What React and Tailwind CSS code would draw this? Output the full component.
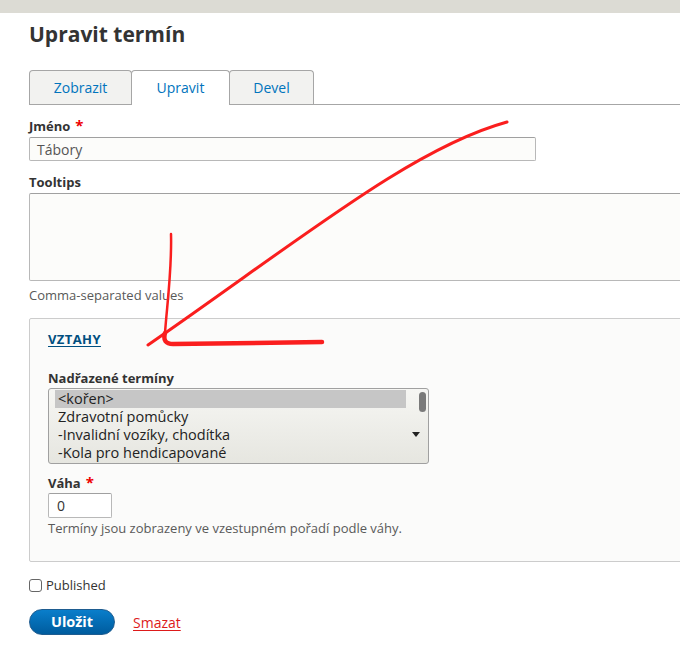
const parents = ['<kořen>', 'Zdravotní pomůcky', '-Invalidní vozíky, chodítka', '-Kola pro hendicapované'];

function Label({ children, required }) {
  return (
    <div className="h-[18px] text-[13px] leading-[18px] font-bold text-[#333]">
      {children}
      {required && <span className="ml-[5px] text-[15px] text-[#e00]">*</span>}
    </div>
  );
}

function Annotation() {
  return (
    <svg className="pointer-events-none absolute left-0 top-0" width="680" height="655" viewBox="0 0 680 655">
      <path d="M507 122 C412 148, 300 240, 148 345" fill="none" stroke="#fa1e1e" strokeWidth="3" strokeLinecap="round" />
      <path d="M171 234 C172 270, 167 305, 165 333" fill="none" stroke="#fa1e1e" strokeWidth="2.5" strokeLinecap="round" />
      <path d="M165 333 Q162 344 173 344 L322 342" fill="none" stroke="#fa1e1e" strokeWidth="4.5" strokeLinecap="round" strokeLinejoin="round" />
    </svg>
  );
}

export default function App() {
  return (
    <div className="relative h-[655px] overflow-hidden bg-white font-['Open_Sans',sans-serif] text-[#333]">
      <div className="h-[13px] bg-[#dcdbd4]" />

      <div className="pl-[29px]">
        <h1 className="mt-[7px] h-[28px] text-[21px] leading-[28px] font-bold text-[#333]">Upravit termín</h1>

        <div className="mt-[22px] flex border-b border-[#a6a6a6]">
          <div className="flex h-[34px] w-[103px] items-center justify-center rounded-t-[4px] border border-b-0 border-[#a6a6a6] bg-[#f2f2f0] text-[14px] text-[#0074bd]">
            Zobrazit
          </div>
          <div className="relative z-10 -mb-px -ml-px flex h-[35px] w-[99px] items-center justify-center rounded-t-[4px] border border-b-0 border-[#a6a6a6] bg-white pb-px text-[14px] text-[#0074bd]">
            Upravit
          </div>
          <div className="-ml-px flex h-[34px] w-[85px] items-center justify-center rounded-t-[4px] border border-b-0 border-[#a6a6a6] bg-[#f2f2f0] text-[14px] text-[#0074bd]">
            Devel
          </div>
        </div>

        <div className="mt-[11px]">
          <Label required>Jméno</Label>
          <div className="mt-[3px] flex h-[24px] w-[507px] items-center rounded-[2px] border border-[#b8b8b8] border-t-[#a0a0a0] bg-[#fcfcfa] pl-[7px] text-[14px] text-[#555]">
            Tábory
          </div>
        </div>

        <div className="mt-[12px]">
          <Label>Tooltips</Label>
          <div className="mt-[2px] h-[88px] w-[700px] rounded-[2px] border border-[#b8b8b8] border-t-[#a0a0a0] bg-[#fcfcfa]" />
          <div className="mt-[5px] text-[13px] leading-[18px] text-[#595959]">Comma-separated values</div>
        </div>

        <div className="mt-[14px] w-[700px] rounded-[2px] border border-[#ccc] bg-[#fbfbfa] pb-[24px] pl-[18px] pt-[11px]">
          <div className="h-[18px] text-[13px] leading-[18px] font-bold tracking-[0.4px] text-[#004f80] underline underline-offset-2">
            VZTAHY
          </div>

          <div className="mt-[21px]">
            <Label>Nadřazené termíny</Label>
            <div className="mt-px flex h-[76px] w-[381px] rounded-[3px] border border-[#a0a0a0] bg-linear-to-b from-[#f6f6f3] to-[#e6e6e0] py-px pl-[6px]">
              <div className="w-[351px]">
                {parents.map((p, i) => (
                  <div
                    key={p}
                    className={
                      'h-[18px] pl-[3px] text-[14.5px] leading-[18px] whitespace-nowrap text-[#222] ' +
                      (i === 0 ? 'bg-[#c6c6c6]' : '')
                    }
                  >
                    {p}
                  </div>
                ))}
              </div>
              <div className="relative flex-1">
                <div className="absolute left-[13px] top-[2px] h-[20px] w-[7px] rounded-full bg-[#7a7a7a]" />
                <svg className="absolute left-[6px] top-[42px]" width="8" height="6" viewBox="0 0 8 6">
                  <polygon points="0,0 8,0 4,5" fill="#222" />
                </svg>
              </div>
            </div>
          </div>

          <div className="mt-[9px]">
            <Label required>Váha</Label>
            <div className="mt-[2px] flex h-[25px] w-[64px] items-center rounded-[2px] border border-[#b8b8b8] border-t-[#a0a0a0] bg-white pl-[8px] text-[14px] text-[#333]">
              0
            </div>
            <div className="mt-[2px] text-[13px] leading-[17px] text-[#595959]">
              Termíny jsou zobrazeny ve vzestupném pořadí podle váhy.
            </div>
          </div>
        </div>

        <label className="mt-[14px] flex h-[18px] items-center gap-[4px] text-[13px] leading-[18px] text-[#333]">
          <span className="h-[13px] w-[13px] rounded-[3px] border border-[#666] bg-white" />
          Published
        </label>

        <div className="mt-[15px] flex items-center">
          <button className="h-[26px] w-[86px] rounded-full border border-[#1e5c90] bg-linear-to-b from-[#0a7ecb] to-[#005c9e] text-[14.5px] font-bold text-white">
            Uložit
          </button>
          <a href="#" className="ml-[18px] text-[14px] text-[#dd1a1a] underline underline-offset-2">
            Smazat
          </a>
        </div>
      </div>

      <Annotation />
    </div>
  );
}
